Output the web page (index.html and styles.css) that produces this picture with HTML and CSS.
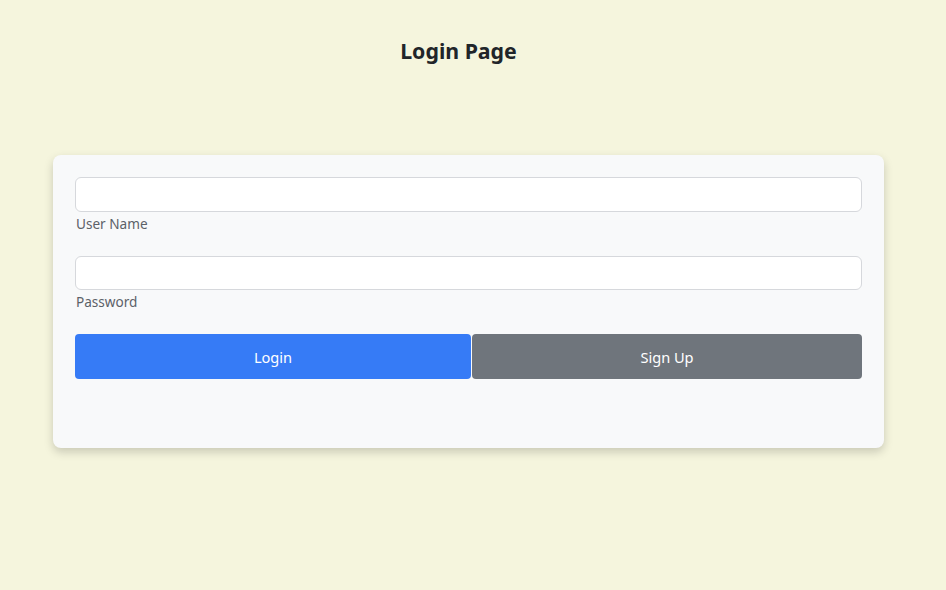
FILE: index.html
```html
<!DOCTYPE html>
<html lang="en">
<head>
<meta charset="utf-8">
<title>Login Page</title>
<link rel="stylesheet" href="styles.css">
</head>
<body>
<div class="page">
  <h1 class="title">Login Page</h1>
  <div class="card">
    <div class="field">
      <input class="input" type="text">
      <label class="label">User Name</label>
    </div>
    <div class="field">
      <input class="input" type="password">
      <label class="label">Password</label>
    </div>
    <div class="actions">
      <button class="btn btn-primary">Login</button>
      <button class="btn btn-secondary">Sign Up</button>
    </div>
  </div>
</div>
</body>
</html>
```
FILE: styles.css
```css
* { box-sizing: border-box; }
html, body { margin: 0; padding: 0; }
body {
  background: #f5f5dd;
  font-family: "Noto Sans", "Open Sans", sans-serif;
  font-size: 16px;
  color: #212529;
  height: 590px;
}
.page {
  padding: 36px 62px 0 53px;
}
.title {
  margin: 0 0 89px;
  font-size: 21.3px;
  line-height: 30px;
  font-weight: 700;
  text-align: center;
  padding-right: 20px;
  color: #212529;
}
.card {
  background: #f8f9fa;
  border-radius: 8px;
  padding: 22px 22px 69px;
  box-shadow: 0 4px 10px rgba(0,0,0,0.18);
  height: 293px;
}
.field {
  display: flex;
  flex-direction: column;
  margin-bottom: 20px;
}
.input {
  height: 34.5px;
  border: 1px solid #d6d8dc;
  border-radius: 6px;
  background: #fff;
  font: inherit;
  padding: 0 12px;
}
.label {
  font-size: 13.6px;
  line-height: 24px;
  color: #5c6168;
  padding-left: 1px;
}
.actions {
  display: flex;
  gap: 1px;
}
.btn {
  height: 45px;
  border: none;
  border-radius: 4px;
  color: #fff;
  font: inherit;
  font-size: 14.6px;
  cursor: pointer;
}
.btn-primary {
  background: #367bf6;
  width: 396px;
}
.btn-secondary {
  background: #6f757c;
  flex: 1;
}
```
